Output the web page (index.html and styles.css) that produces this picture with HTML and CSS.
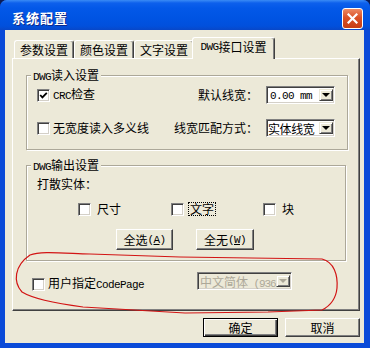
FILE: index.html
```html
<!DOCTYPE html>
<html lang="zh">
<head>
<meta charset="utf-8">
<link rel="stylesheet" href="styles.css">
</head>
<body>
<div class="window">
  <div class="titlebar">
    <span class="title">系统配置</span>
    <span class="close"><svg width="11" height="11" viewBox="0 0 11 11"><path d="M1.5 1.5 L9.5 9.5 M9.5 1.5 L1.5 9.5" stroke="#fff" stroke-width="2.2" stroke-linecap="square"/></svg></span>
  </div>
  <div class="client">
    <div class="tabs">
      <div class="tab">参数设置</div>
      <div class="tab">颜色设置</div>
      <div class="tab">文字设置</div>
      <div class="tab active"><span class="lat">DWG</span>接口设置</div>
    </div>
    <div class="panel">
      <fieldset class="group g1">
        <legend><span class="lat">DWG</span>读入设置</legend>
        <div class="gbody g1body">
          <div class="row">
            <span class="chk"><svg width="9" height="9" viewBox="0 0 9 9"><path d="M1.2 4 L3.4 6.4 L7.8 1.8" fill="none" stroke="#000" stroke-width="1.8"/></svg></span>
            <span class="txt"><span class="lat">CRC</span>检查</span>
            <span class="fill"></span>
            <span class="lbl">默认线宽：</span>
            <span class="combo"><span class="val lat">0.00 mm</span><span class="arrow"><i></i></span></span>
          </div>
          <div class="row">
            <span class="chk"></span>
            <span class="txt">无宽度读入多义线</span>
            <span class="fill"></span>
            <span class="lbl">线宽匹配方式：</span>
            <span class="combo"><span class="val cjk fit">实体线宽</span><span class="arrow"><i></i></span></span>
          </div>
        </div>
      </fieldset>
      <fieldset class="group g2">
        <legend><span class="lat">DWG</span>输出设置</legend>
        <div class="gbody g2body">
          <div class="line">打散实体：</div>
          <div class="chkrow">
            <span class="item"><span class="chk"></span><span class="txt2">尺寸</span></span>
            <span class="item"><span class="chk"></span><span class="txt2 focus">文字</span></span>
            <span class="item"><span class="chk"></span><span class="txt2">块</span></span>
          </div>
          <div class="btnrow">
            <span class="btn b1">全选<span class="lat">(<u>A</u>)</span></span>
            <span class="btn b2">全无<span class="lat">(<u>W</u>)</span></span>
          </div>
        </div>
      </fieldset>
      <div class="cprow">
        <span class="cplabel"><span class="chk"></span><span class="txt">用户指定<span class="lat">CodePage</span></span></span>
        <span class="combo disabled"><span class="val dis">中文简体<span class="lat tight"> (936</span></span><span class="arrow"><i></i></span></span>
      </div>
    </div>
    <div class="footer">
      <span class="btn default">确定</span>
      <span class="btn">取消</span>
    </div>
  </div>
  <svg class="annot" width="370" height="348" viewBox="0 0 370 348">
    <path d="M30 255 C40 251 60 253 90 254 L180 257 L322 259 C334 262 338 275 337 288 C336 298 330 306 322 310 L268 312 L185 313 L83 307 C60 304 35 300 22 292 C13 282 14 266 30 255 Z" fill="none" stroke="#D21414" stroke-width="1.2"/>
  </svg>
</div>
</body>
</html>
```

FILE: styles.css
```css
* { box-sizing: border-box; }
body {
  margin: 0;
  background: #0b1c55;
  font-family: "Noto Sans CJK SC", "Noto Sans", sans-serif;
  font-size: 12px;
  color: #000;
}
.lat {
  font-family: "Liberation Mono", "DejaVu Sans Mono", monospace;
  font-size: 11px;
  letter-spacing: -0.6px;
}
.lat.tight { letter-spacing: -1.1px; }

.window {
  position: relative;
  width: 370px;
  height: 348px;
  background: #0A4AD8;
  display: flex;
  flex-direction: column;
  border-radius: 7px 7px 0 0;
  overflow: hidden;
}
.titlebar {
  height: 30px;
  flex: none;
  display: flex;
  align-items: center;
  justify-content: space-between;
  padding: 6px 7px 0 12px;
  background: linear-gradient(180deg, #3A8BF5 0px, #0D60EC 3px, #0358E8 8px, #0054E3 18px, #0150DC 26px, #0847C8 30px);
}
.title {
  color: #fff;
  font-weight: bold;
  font-size: 13px;
  letter-spacing: 1px;
  line-height: 16px;
  text-shadow: 1px 1px 0 #0B2A8C;
}
.close {
  width: 21px;
  height: 21px;
  border: 1px solid #fff;
  border-radius: 3px;
  background: linear-gradient(180deg, #EC8A64 0%, #DB5127 45%, #C73D13 100%);
  display: flex;
  align-items: center;
  justify-content: center;
}

.client {
  flex: 1;
  margin: 0 6px 5px 5px;
  background: #ECE9D8;
  padding: 7px 4px 0 7px;
  display: flex;
  flex-direction: column;
}
.tabs {
  height: 21px;
  display: flex;
  align-items: flex-end;
  padding-left: 2px;
  position: relative;
  z-index: 1;
}
.tab {
  width: 60px;
  height: 18px;
  border: 1px solid;
  border-color: #fff #404040 transparent #fff;
  border-bottom: none;
  box-shadow: inset -1px 0 0 #808080;
  border-radius: 3px 3px 0 0;
  display: flex;
  align-items: center;
  justify-content: center;
  line-height: 14px;
  background: #ECE9D8;
}
.tab.active {
  width: 83px;
  height: 22px;
  margin-left: -2px;
  margin-bottom: -1px;
  padding-bottom: 3px;
}

.panel {
  width: 348px;
  height: 253px;
  flex: none;
  border: 1px solid;
  border-color: #fff #404040 #404040 #fff;
  box-shadow: inset -1px -1px 0 #808080;
  padding: 9px 11px 0 13px;
}
.group {
  margin: 0;
  padding: 0;
  min-width: 0;
  border: 1px solid #ACA899;
  box-shadow: inset 1px 1px 0 #fff, 1px 1px 0 #fff;
}
.g1 { width: 322px; }
.g2 { width: 320px; margin-top: 8px; }
legend {
  padding: 0 2px;
  margin-left: 4px;
  line-height: 14px;
  height: 14px;
  background: #ECE9D8;
}
.g1body { padding: 4px 12px 12px 10px; }
.row { display: flex; align-items: center; height: 18px; }
.row + .row { margin-top: 15px; }
.fill { flex: 1; }
.chk {
  width: 13px;
  height: 13px;
  flex: none;
  background: #fff;
  border: 1px solid;
  border-color: #808080 #fff #fff #808080;
  box-shadow: inset 1px 1px 0 #404040, inset -1px -1px 0 #D4D0C8;
  display: flex;
  align-items: center;
  justify-content: center;
}
.txt { margin-left: 3px; line-height: 14px; white-space: nowrap; }
.lbl { line-height: 14px; }
.combo {
  width: 69px;
  height: 18px;
  margin-left: 8px;
  flex: none;
  background: #fff;
  border: 1px solid;
  border-color: #808080 #fff #fff #808080;
  box-shadow: inset 1px 1px 0 #404040, inset -1px -1px 0 #D4D0C8;
  display: flex;
  align-items: stretch;
  padding: 2px 1px;
}
.combo .val {
  flex: 1;
  min-width: 0;
  overflow: hidden;
  white-space: nowrap;
  padding-left: 2px;
  line-height: 14px;
}
.combo .val.cjk { padding-left: 1px; }
.combo .val.fit { overflow: visible; letter-spacing: -0.4px; padding-left: 0; }
.combo .val.dis { overflow: visible; padding-left: 1px; }
.arrow {
  width: 14px;
  flex: none;
  background: #ECE9D8;
  border: 1px solid;
  border-color: #ECE9D8 #404040 #404040 #ECE9D8;
  box-shadow: inset 1px 1px 0 #fff, inset -1px -1px 0 #808080;
  display: flex;
  align-items: center;
  justify-content: center;
}
.arrow i {
  width: 0;
  height: 0;
  border-left: 4px solid transparent;
  border-right: 4px solid transparent;
  border-top: 4px solid #000;
}

.g2body { padding: 5px 0 10px 10px; }
.line { line-height: 14px; height: 14px; }
.chkrow {
  margin-top: 11px;
  height: 14px;
  display: grid;
  grid-template-columns: 93px 92px auto;
  padding-left: 41px;
}
.item { display: flex; align-items: center; }
.txt2 {
  margin-left: 4px;
  padding: 0 1px;
  border: 1px dotted transparent;
  line-height: 12px;
}
.txt2.focus { border-color: #000; }
.btnrow {
  margin-top: 13px;
  display: flex;
  gap: 23px;
  padding-left: 79px;
}
.btn {
  height: 21px;
  background: #ECE9D8;
  border: 1px solid;
  border-color: #fff #404040 #404040 #fff;
  box-shadow: inset -1px -1px 0 #808080;
  display: flex;
  align-items: center;
  justify-content: center;
  line-height: 14px;
}
.b1 { width: 57px; }
.b2 { width: 58px; }

.cprow {
  margin-top: 11px;
  display: flex;
  align-items: flex-start;
}
.cplabel {
  width: 165px;
  margin-left: 6px;
  margin-top: 5px;
  height: 14px;
  display: flex;
  align-items: center;
}
.combo.disabled {
  width: 95px;
  margin-left: 0;
  background: #ECE9D8;
  color: #ACA899;
}
.combo.disabled .arrow i { border-top-color: #ACA899; }

.footer {
  margin-top: 7px;
  display: flex;
  justify-content: flex-end;
  gap: 7px;
}
.footer .btn { width: 75px; height: 19px; }
.footer .btn.default {
  border-color: #000;
  box-shadow: inset 1px 1px 0 #fff, inset -1px -1px 0 #404040, inset -2px -2px 0 #808080;
}

.annot {
  position: absolute;
  left: 0;
  top: 0;
  pointer-events: none;
}
```
